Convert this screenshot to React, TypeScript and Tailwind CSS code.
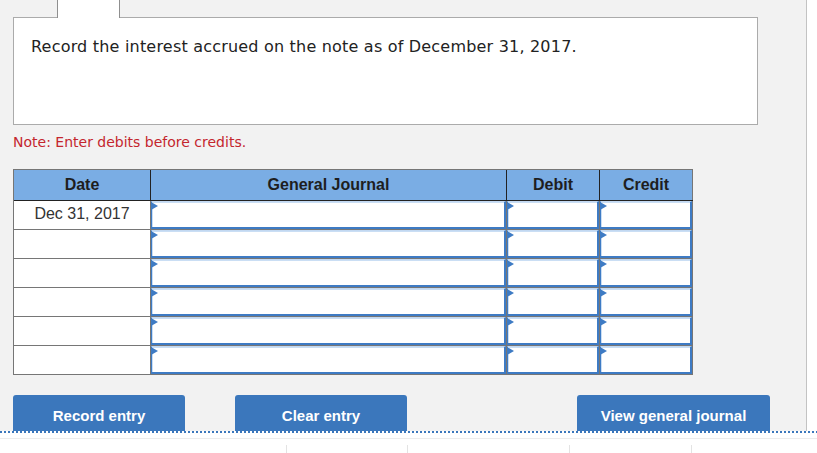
import React from 'react';

const rows = ['Dec 31, 2017', '', '', '', '', ''];

const EntryCell: React.FC<{ w: string }> = ({ w }) => (
  <div className={`${w} h-full border-r border-[#767676]`}>
    <div className="relative h-full w-full border-l border-t border-r-2 border-b-2 border-[#3e7bc4] border-t-[#c2d8f1] shadow-[inset_1px_1px_0_#cadef4] bg-white">
      <span className="absolute -left-px top-0 h-0 w-0 border-y-[4px] border-y-transparent border-l-[7px] border-l-[#3e7bc4]" />
    </div>
  </div>
);

export default function App() {
  return (
    <div className="w-[817px] h-[453px] overflow-hidden bg-white font-['DejaVu_Sans',sans-serif]">
      <div className="flex h-[431px]">
        <div className="w-[807px] h-full bg-[#f2f2f2] border-r border-[#c3c3c3] pl-[13px] flex flex-col">
          <div className="ml-[44px] w-[63px] h-[18px] -mb-px relative z-10 bg-white border-x border-[#8f8f8f]" />
          <div className="w-[745px] h-[108px] bg-white border border-[#ababab] pl-[17px] pt-[19px] text-[16px] tracking-[0.2px] leading-[normal] text-[#222]">
            Record the interest accrued on the note as of December 31, 2017.
          </div>
          <p className="mt-[9px] text-[14px] leading-[normal] text-[#c4262e]">Note: Enter debits before credits.</p>

          <div className="mt-[19px] w-[680px] border-l border-t border-[#767676] font-['Liberation_Sans',Arial,sans-serif]">
            <div className="flex h-[31px] bg-[#7aade4] border-b border-[#222] text-[16px] font-bold text-[#1e1e1e]">
              <div className="w-[137px] border-r border-[#222] flex items-center justify-center">Date</div>
              <div className="w-[356px] border-r border-[#222] flex items-center justify-center">General Journal</div>
              <div className="w-[93px] border-r border-[#222] flex items-center justify-center">Debit</div>
              <div className="w-[93px] border-r border-[#767676] flex items-center justify-center">Credit</div>
            </div>
            {rows.map((d, i) => (
              <div key={i} className="flex h-[29px] border-b border-[#767676] bg-white">
                <div className="w-[137px] h-full border-r border-[#767676] text-center text-[16px] leading-[20px] pt-[3px] text-[#333]">
                  {d}
                </div>
                <EntryCell w="w-[356px]" />
                <EntryCell w="w-[93px]" />
                <EntryCell w="w-[93px]" />
              </div>
            ))}
          </div>

          <div className="mt-[20px] flex pr-[36px] font-['Liberation_Sans',Arial,sans-serif] text-[15px] font-bold text-white">
            <button className="w-[172px] h-[36px] pt-[7px] rounded-t-[3px] bg-[#3b77bc] flex items-center justify-center">
              Record entry
            </button>
            <button className="ml-[50px] w-[172px] h-[36px] pt-[7px] rounded-t-[3px] bg-[#3b77bc] flex items-center justify-center">
              Clear entry
            </button>
            <button className="ml-auto w-[193px] h-[36px] pt-[7px] rounded-t-[3px] bg-[#3b77bc] flex items-center justify-center">
              View general journal
            </button>
          </div>
        </div>
        <div className="flex-1 bg-white" />
      </div>
      <div className="h-[2px] w-full bg-[repeating-linear-gradient(90deg,#3b77bc_0_2px,transparent_2px_4px)]" />
      <div className="mt-[5px] h-px bg-[#ececec]" />
      <div className="mt-[6px] flex h-[20px]">
        <div className="w-[286px]" />
        <div className="w-[121px] border-l border-[#e3e3e3]" />
        <div className="w-[162px] border-l border-[#e3e3e3]" />
        <div className="w-[122px] border-l border-[#e3e3e3]" />
        <div className="flex-1 border-l border-[#e3e3e3]" />
      </div>
    </div>
  );
}
